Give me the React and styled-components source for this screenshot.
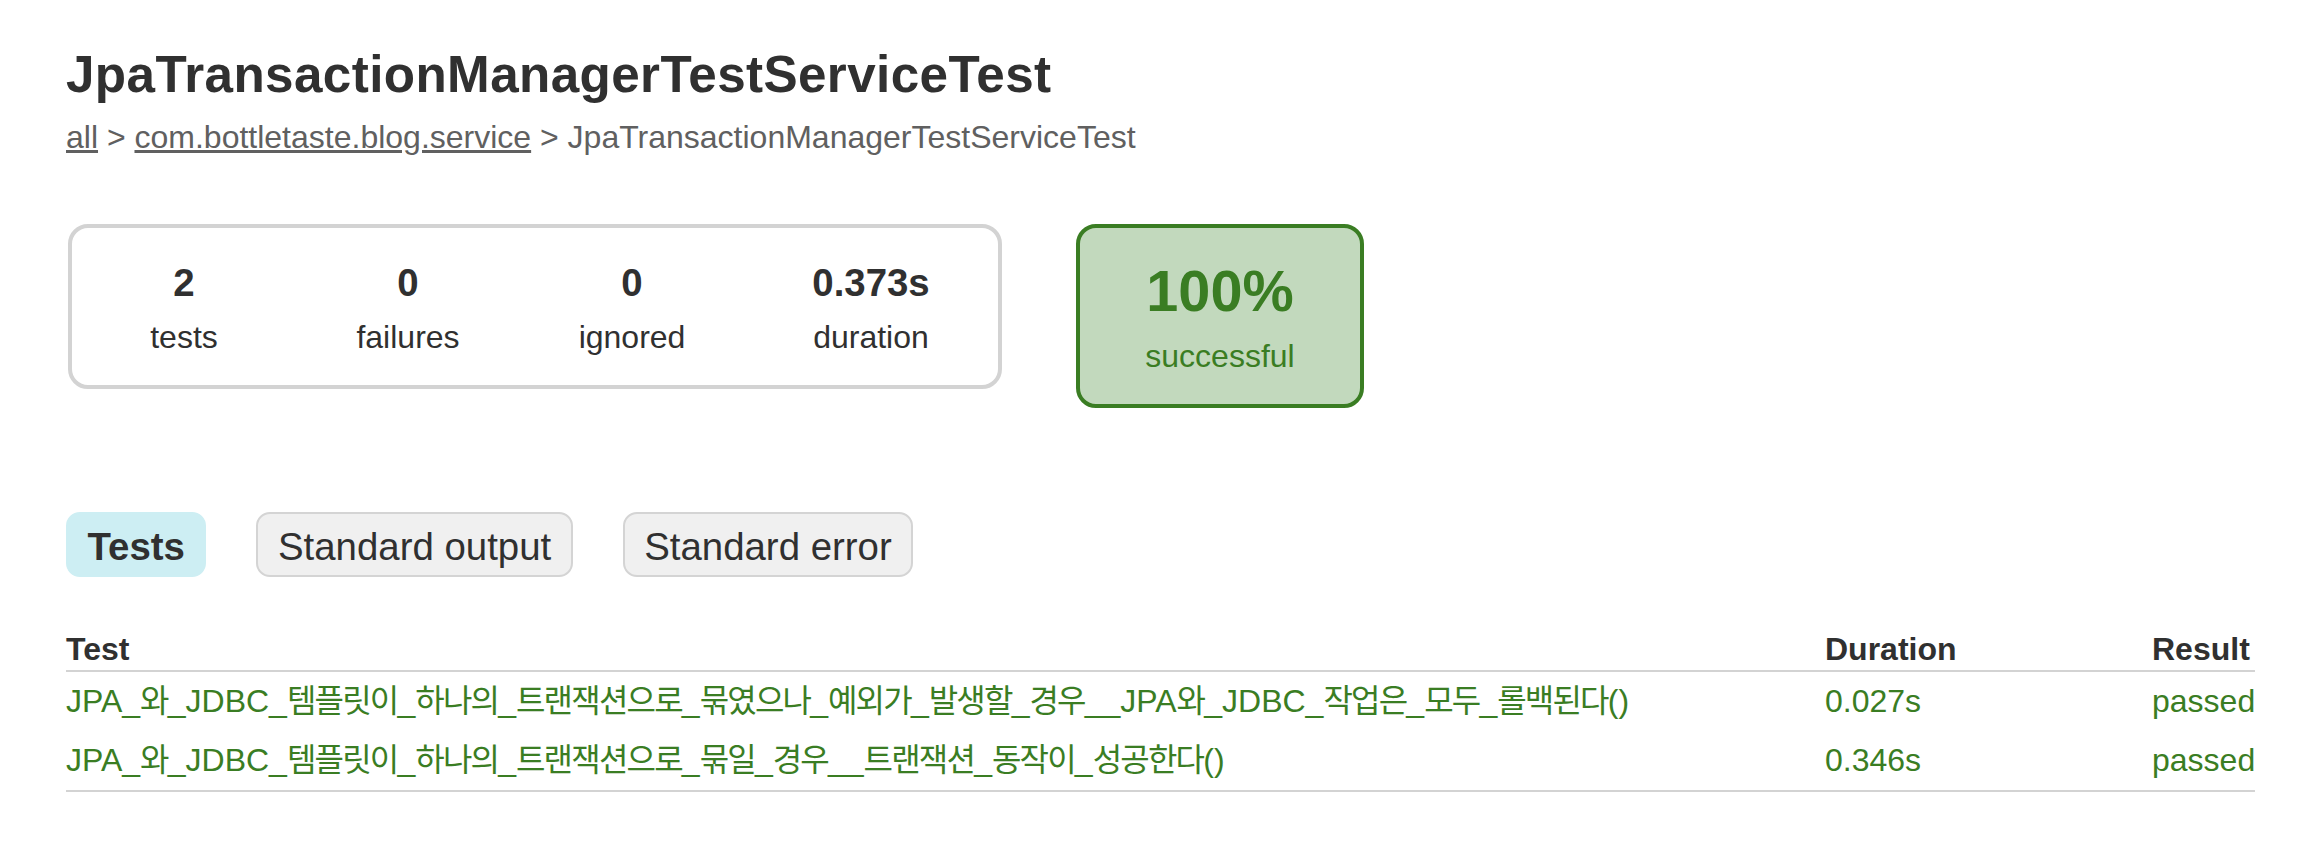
import React from "react";
import styled, { createGlobalStyle } from "styled-components";

const GlobalStyle = createGlobalStyle`
  body {
    margin: 0;
    padding: 0;
    background: #ffffff;
    color: #303030;
    font-family: "Liberation Sans", "Noto Sans CJK KR", Arial, sans-serif;
    font-size: 32px;
  }
`;

const green = "#3a7d23";

const tests = [
  {
    name: "JPA_와_JDBC_템플릿이_하나의_트랜잭션으로_묶였으나_예외가_발생할_경우__JPA와_JDBC_작업은_모두_롤백된다()",
    duration: "0.027s",
    result: "passed",
  },
  {
    name: "JPA_와_JDBC_템플릿이_하나의_트랜잭션으로_묶일_경우__트랜잭션_동작이_성공한다()",
    duration: "0.346s",
    result: "passed",
  },
];

const counters = [
  { value: "2", label: "tests", width: 220 },
  { value: "0", label: "failures", width: 220 },
  { value: "0", label: "ignored", width: 220 },
  { value: "0.373s", label: "duration", width: 250 },
];

// hangul runs get their own span so they can be set a little tighter
const TestName = ({ name }) =>
  name
    .split(/([가-힣]+)/)
    .map((part, i) =>
      /[가-힣]/.test(part) ? <Hangul key={i}>{part}</Hangul> : part
    );

const App = () => {
  return (
    <>
      <GlobalStyle />
      <Content>
        <Title>JpaTransactionManagerTestServiceTest</Title>
        <Breadcrumbs>
          <Crumb href="#">all</Crumb> &gt;{" "}
          <Crumb href="#">com.bottletaste.blog.service</Crumb> &gt;
          JpaTransactionManagerTestServiceTest
        </Breadcrumbs>

        <Summary>
          <SummaryGroup>
            {counters.map((c, index) => (
              <InfoBox key={index} $width={c.width}>
                <Counter>{c.value}</Counter>
                <p>{c.label}</p>
              </InfoBox>
            ))}
          </SummaryGroup>
          <SuccessRate>
            <Percent>100%</Percent>
            <p>successful</p>
          </SuccessRate>
        </Summary>

        <TabLinks>
          <Tab $selected>
            <TabTitle>Tests</TabTitle>
          </Tab>
          <Tab>
            <TabLink href="#">Standard output</TabLink>
          </Tab>
          <Tab>
            <TabLink href="#">Standard error</TabLink>
          </Tab>
        </TabLinks>

        <TestTable>
          <colgroup>
            <col style={{ width: 1567 }} />
            <col style={{ width: 327 }} />
            <col style={{ width: 295 }} />
          </colgroup>
          <thead>
            <tr>
              <th>Test</th>
              <th>Duration</th>
              <th>Result</th>
            </tr>
          </thead>
          <tbody>
            {tests.map((t, index) => (
              <tr key={index}>
                <td>
                  <TestName name={t.name} />
                </td>
                <td>{t.duration}</td>
                <td>{t.result}</td>
              </tr>
            ))}
          </tbody>
        </TestTable>
      </Content>
    </>
  );
};

const Content = styled.div`
  padding: 45px 51px 40px 66px;
`;

const Title = styled.h1`
  margin: 0;
  font-size: 51.2px;
  font-weight: bold;
  letter-spacing: 0.4px;
  white-space: nowrap;
`;

const Breadcrumbs = styled.div`
  margin-top: 15px;
  color: #606060;
  white-space: nowrap;
`;

const Crumb = styled.a`
  color: #606060;
  text-decoration: underline;
`;

const Summary = styled.div`
  display: flex;
  align-items: flex-start;
  margin-top: 68px;
  padding-left: 2px;
`;

const SummaryGroup = styled.div`
  display: flex;
  border: solid 4px #d3d3d3;
  border-radius: 20px;
`;

const InfoBox = styled.div`
  width: ${(p) => p.$width}px;
  margin: 0 2px;
  padding: 33px 0 29px;
  text-align: center;

  p {
    margin: 0;
  }
`;

const Counter = styled.p`
  font-size: 38.4px;
  font-weight: bold;
  margin-bottom: 14px !important;
`;

const SuccessRate = styled.div`
  width: 280px;
  margin-left: 74px;
  padding: 29.5px 0;
  text-align: center;
  color: ${green};
  background-color: #c2d9bd;
  border: solid 4px ${green};
  border-radius: 20px;

  p {
    margin: 0;
  }
`;

const Percent = styled.p`
  font-size: 57.6px;
  font-weight: bold;
  margin-bottom: 14px !important;
`;

const TabLinks = styled.ul`
  display: flex;
  margin: 104px 0 0;
  padding: 0;
  list-style: none;
`;

const Tab = styled.li`
  margin-right: 50px;
  padding: 10.5px 19.5px 6.5px;
  border: solid 2px ${(p) => (p.$selected ? "#cdeef3" : "#d4d4d4")};
  border-radius: 14px;
  background-color: ${(p) => (p.$selected ? "#cdeef3" : "#f0f0f0")};
  font-size: 38.4px;
`;

const TabTitle = styled.h2`
  margin: 0;
  padding: 0;
  font-size: 38.4px;
  font-weight: bold;
  white-space: nowrap;
`;

const TabLink = styled.a`
  display: block;
  color: #303030;
  text-decoration: none;
  white-space: nowrap;
`;

const TestTable = styled.table`
  margin-top: 52px;
  width: 2189px;
  table-layout: fixed;
  border-collapse: collapse;
  border-bottom: solid 2px #d3d3d3;

  th {
    text-align: left;
    white-space: nowrap;
    padding: 2px 0 2px 192px;
    border-bottom: solid 2px #d3d3d3;
    font-weight: bold;
  }

  td {
    white-space: nowrap;
    padding: 9px 0 10px 192px;
    line-height: 40px;
    color: ${green};
  }

  th:first-child,
  td:first-child {
    padding-left: 0;
  }
`;

const Hangul = styled.span`
  letter-spacing: -1.8px;
`;

export default App;
